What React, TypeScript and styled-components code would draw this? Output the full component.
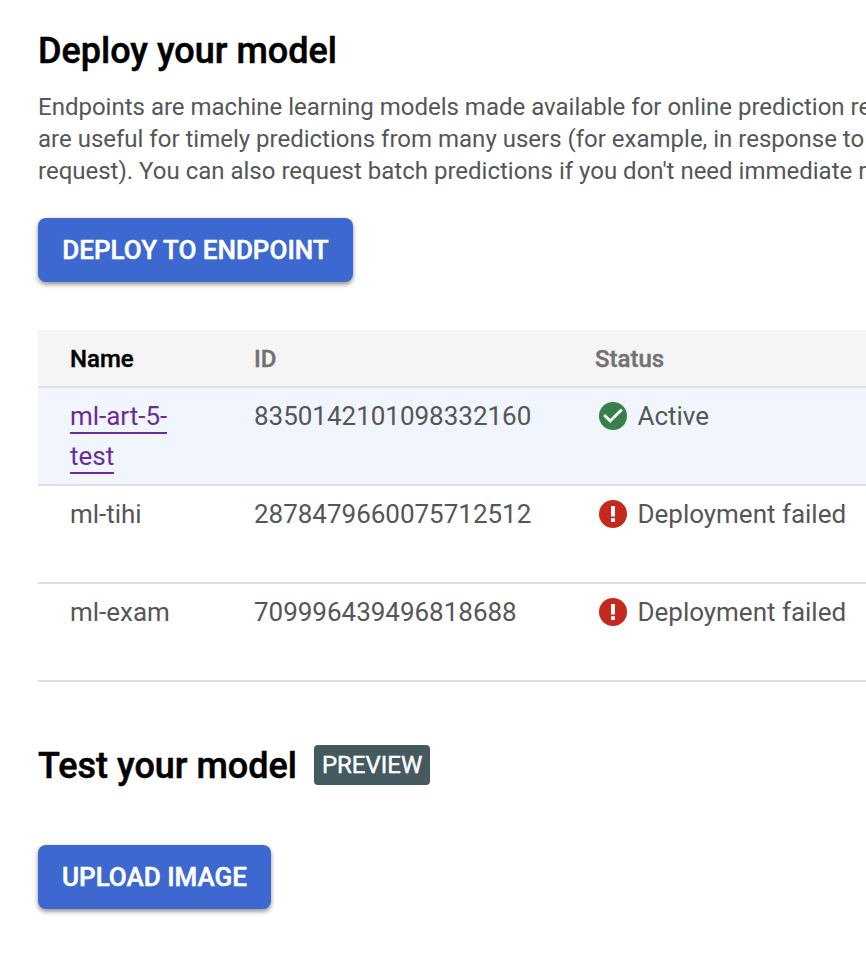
import React from "react";
import styled, { createGlobalStyle } from "styled-components";

const Global = createGlobalStyle`
  * { box-sizing: border-box; }
  html, body { margin: 0; background: #fff; overflow: hidden; }
  body { font-family: Roboto, sans-serif; color: #555657; }
`;

const Page = styled.main`
  width: 866px;
  height: 970px;
  padding: 31px 0 0 38px;
  overflow: hidden;
`;

const Title = styled.h2`
  margin: 0;
  font-size: 36px;
  line-height: 40px;
  font-weight: 500;
  color: #000;
  white-space: nowrap;
  -webkit-text-stroke: 0.5px currentColor;
`;

const Description = styled.p`
  margin: 20px 0 31px;
  font-size: 24px;
  line-height: 32px;
  white-space: nowrap;
`;

const Line = styled.span`
  display: block;
`;

const Button = styled.button<{ $width: number }>`
  display: flex;
  align-items: center;
  justify-content: center;
  width: ${(p) => p.$width}px;
  height: 64px;
  padding: 0;
  border: 0;
  border-radius: 8px;
  background: #3c68cf;
  color: #fff;
  font: 500 26px/32px Roboto, sans-serif;
  white-space: nowrap;
  -webkit-text-stroke: 0.5px currentColor;
  box-shadow: 0 3px 4px rgba(0, 0, 0, 0.32), 0 1px 5px rgba(0, 0, 0, 0.14);
`;

const Table = styled.div`
  margin-top: 48px;
`;

const Row = styled.div<{ $active?: boolean }>`
  display: grid;
  grid-template-columns: 184px 341px 1fr;
  height: 98px;
  padding: 8px 0 0 32px;
  border-bottom: 2px solid #e0e0e0;
  background: ${(p) => (p.$active ? "#f0f5fe" : "#fff")};
  font-size: 26px;
  line-height: 40px;
  letter-spacing: -0.02px;
  white-space: nowrap;
`;

const HeaderRow = styled(Row)`
  height: 58px;
  padding-top: 9px;
  background: #f5f5f5;
  color: #727272;
  font-size: 24px;
  font-weight: 500;
  letter-spacing: 0;
  -webkit-text-stroke: 0.4px currentColor;
`;

const NameHeading = styled.span`
  color: #000;
`;

const Link = styled.a`
  color: #6a2c98;
`;

const LinkLine = styled.span`
  display: block;
  width: max-content;
  height: 38px;
  margin-bottom: 2px;
  border-bottom: 2px solid currentColor;
`;

const Status = styled.span`
  display: flex;
  align-items: center;
  height: 40px;
  gap: 9.5px;
  padding-left: 3px;
`;

const StatusIcon = styled.svg`
  display: block;
  flex: none;
  width: 30px;
  height: 30px;
`;

const TestHeader = styled.div`
  display: flex;
  align-items: center;
  gap: 17px;
  margin: 63px 0 60px;
`;

const TestTitle = styled(Title)`
  padding-top: 1px;
  height: 40px;
`;

const Badge = styled.span`
  width: 116px;
  height: 40px;
  border-radius: 4px;
  background: #455a60;
  color: #fff;
  font-size: 24px;
  line-height: 41px;
  text-align: center;
  -webkit-text-stroke: 0.4px currentColor;
`;

const SuccessIcon = () => (
  <StatusIcon viewBox="0 0 30 30">
    <circle cx="15" cy="15" r="14" fill="#37804a" />
    <path d="M12.2 22l-7-7 2-2 5 5L22.8 7.4l2 2z" fill="#fff" />
  </StatusIcon>
);

const ErrorIcon = () => (
  <StatusIcon viewBox="0 0 30 30">
    <circle cx="15" cy="15" r="14" fill="#c5281c" />
    <path d="M13 7h4v10.5h-4zM13 19.3h4v3.8h-4z" fill="#fff" />
  </StatusIcon>
);

const failures = [
  { name: "ml-tihi", id: "2878479660075712512" },
  { name: "ml-exam", id: "709996439496818688" },
];

export default function App() {
  return (
    <>
      <Global />
      <Page>
        <Title>Deploy your model</Title>
        <Description>
          <Line>Endpoints are machine learning models made available for online prediction requests.</Line>
          <Line>are useful for timely predictions from many users (for example, in response to</Line>
          <Line>request). You can also request batch predictions if you don't need immediate results.</Line>
        </Description>
        <Button $width={315}>DEPLOY TO ENDPOINT</Button>
        <Table>
          <HeaderRow>
            <NameHeading>Name</NameHeading>
            <span>ID</span>
            <span>Status</span>
          </HeaderRow>
          <Row $active>
            <Link>
              <LinkLine>ml-art-5-</LinkLine>
              <LinkLine>test</LinkLine>
            </Link>
            <span>8350142101098332160</span>
            <Status><SuccessIcon />Active</Status>
          </Row>
          {failures.map((item) => (
            <Row key={item.id}>
              <span>{item.name}</span>
              <span>{item.id}</span>
              <Status><ErrorIcon />Deployment failed</Status>
            </Row>
          ))}
        </Table>
        <TestHeader>
          <TestTitle>Test your model</TestTitle>
          <Badge>PREVIEW</Badge>
        </TestHeader>
        <Button $width={233}>UPLOAD IMAGE</Button>
      </Page>
    </>
  );
}
